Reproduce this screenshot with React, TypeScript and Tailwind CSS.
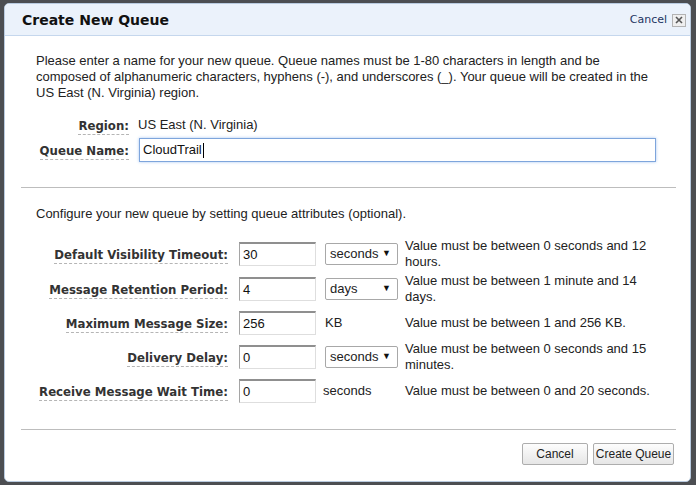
import React from "react";

const arial = { fontFamily: '"Liberation Sans", Arial, sans-serif' };
const verdana = { fontFamily: '"DejaVu Sans", Verdana, sans-serif' };

function Label({ children, className = "" }: { children: React.ReactNode; className?: string }) {
  return (
    <div className={"text-right " + className}>
      <span
        className="text-[11.75px] font-bold text-[#333] border-b border-dashed border-[#b5b5b5] leading-[15px] inline-block"
        style={verdana}
      >
        {children}
      </span>
    </div>
  );
}

function TextInput({ value }: { value: string }) {
  return (
    <div className="w-[77px] h-[24px] flex items-center pl-[3px] bg-white border border-t-[#8f8f8f] border-l-[#a5a5a5] border-r-[#dedede] border-b-[#dedede] border-t-2 text-[13px] text-[#111]">
      {value}
    </div>
  );
}

function Select({ value }: { value: string }) {
  return (
    <div className="w-[73px] h-[22px] flex items-center justify-between pl-[4px] pr-[6px] bg-white border border-[#a8a8a8] rounded-[2px] text-[13px] text-[#222]">
      <span>{value}</span>
      <span className="text-[9px] text-[#111]">▼</span>
    </div>
  );
}

type Row = { label: string; value: string; unit: string; select: boolean; hint: string; h: string };

const rows: Row[] = [
  { label: "Default Visibility Timeout:", value: "30", unit: "seconds", select: true, hint: "Value must be between 0 seconds and 12 hours.", h: "h-[36px]" },
  { label: "Message Retention Period:", value: "4", unit: "days", select: true, hint: "Value must be between 1 minute and 14 days.", h: "h-[34px]" },
  { label: "Maximum Message Size:", value: "256", unit: "KB", select: false, hint: "Value must be between 1 and 256 KB.", h: "h-[34px]" },
  { label: "Delivery Delay:", value: "0", unit: "seconds", select: true, hint: "Value must be between 0 seconds and 15 minutes.", h: "h-[34px]" },
  { label: "Receive Message Wait Time:", value: "0", unit: "seconds", select: false, hint: "Value must be between 0 and 20 seconds.", h: "h-[34px]" },
];

export default function App() {
  return (
    <div className="w-[696px] h-[485px] bg-[#4c4e52] pt-[3px] pl-[4px] overflow-hidden" style={arial}>
      <div className="w-[687px] h-[479px] bg-white rounded-[5px] border border-[#b9cbe0] overflow-hidden flex flex-col">
        {/* Header */}
        <div className="h-[32px] shrink-0 bg-[#ebf2fb] border-b border-[#c5d7ed] flex items-center justify-between pl-[17px] pr-[4px] pt-px">
          <div className="text-[14px] font-bold text-[#111]" style={verdana}>
            Create New Queue
          </div>
          <div className="flex items-center gap-[5px]">
            <span className="text-[11px] text-[#1d3561]" style={verdana}>
              Cancel
            </span>
            <div className="w-[14px] h-[13px] border border-[#b3b3b3] bg-[#efefef] flex items-center justify-center">
              <svg width="8" height="8" viewBox="0 0 8 8">
                <path d="M1 1 L7 7 M7 1 L1 7" stroke="#555" strokeWidth="1.6" />
              </svg>
            </div>
          </div>
        </div>

        {/* Body */}
        <div className="pl-[16px] pr-[14px] text-[#222]">
          <p className="pl-[15px] pr-[22px] pt-[17px] text-[13px] leading-[16px]">
            Please enter a name for your new queue. Queue names must be 1-80 characters in length and be composed of
            alphanumeric characters, hyphens (-), and underscores (_). Your queue will be created in the US East (N.
            Virginia) region.
          </p>

          <div className="flex items-center mt-[16px] h-[16px]">
            <Label className="w-[108px]">Region:</Label>
            <span className="ml-[9px] text-[13px] leading-[16px]">US East (N. Virginia)</span>
          </div>

          <div className="flex items-center mt-[5px] h-[24px]">
            <Label className="w-[108px]">Queue Name:</Label>
            <div className="ml-[10px] w-[517px] h-[24px] flex items-center pl-[3px] bg-white border border-[#7ea5dc] shadow-[0_0_3px_#a9c8f2] text-[13px] text-[#111]">
              CloudTrail<span className="w-px h-[15px] bg-black ml-px" />
            </div>
          </div>

          <div className="mt-[25px] h-px bg-[#bdbdbd]" />

          <p className="pl-[15px] mt-[18px] text-[13px] leading-[16px]">
            Configure your new queue by setting queue attributes (optional).
          </p>

          <div className="mt-[14px]">
            {rows.map((r) => (
              <div key={r.label} className={"flex items-center " + r.h}>
                <Label className="w-[207px]">{r.label}</Label>
                <div className="ml-[11px]">
                  <TextInput value={r.value} />
                </div>
                <div className="ml-[9px] w-[73px] text-[13px]">
                  {r.select ? <Select value={r.unit} /> : <span className={r.unit === "KB" ? "" : "-ml-[2px]"}>{r.unit}</span>}
                </div>
                <div className="ml-[7px] w-[252px] text-[13px] leading-[16px]">{r.hint}</div>
              </div>
            ))}
          </div>

          <div className="mt-[21px] h-px bg-[#bdbdbd]" />

          <div className="flex justify-end gap-[5px] mt-[13px] pr-[2px]">
            <button className="w-[66px] h-[22px] border border-[#adadad] rounded-[2px] bg-gradient-to-b from-[#fdfdfd] to-[#e6e6e6] text-[12px] text-[#222]">
              Cancel
            </button>
            <button className="w-[81px] h-[22px] border border-[#adadad] rounded-[2px] bg-gradient-to-b from-[#fdfdfd] to-[#e6e6e6] text-[12px] text-[#222]">
              Create Queue
            </button>
          </div>
        </div>
      </div>
    </div>
  );
}
